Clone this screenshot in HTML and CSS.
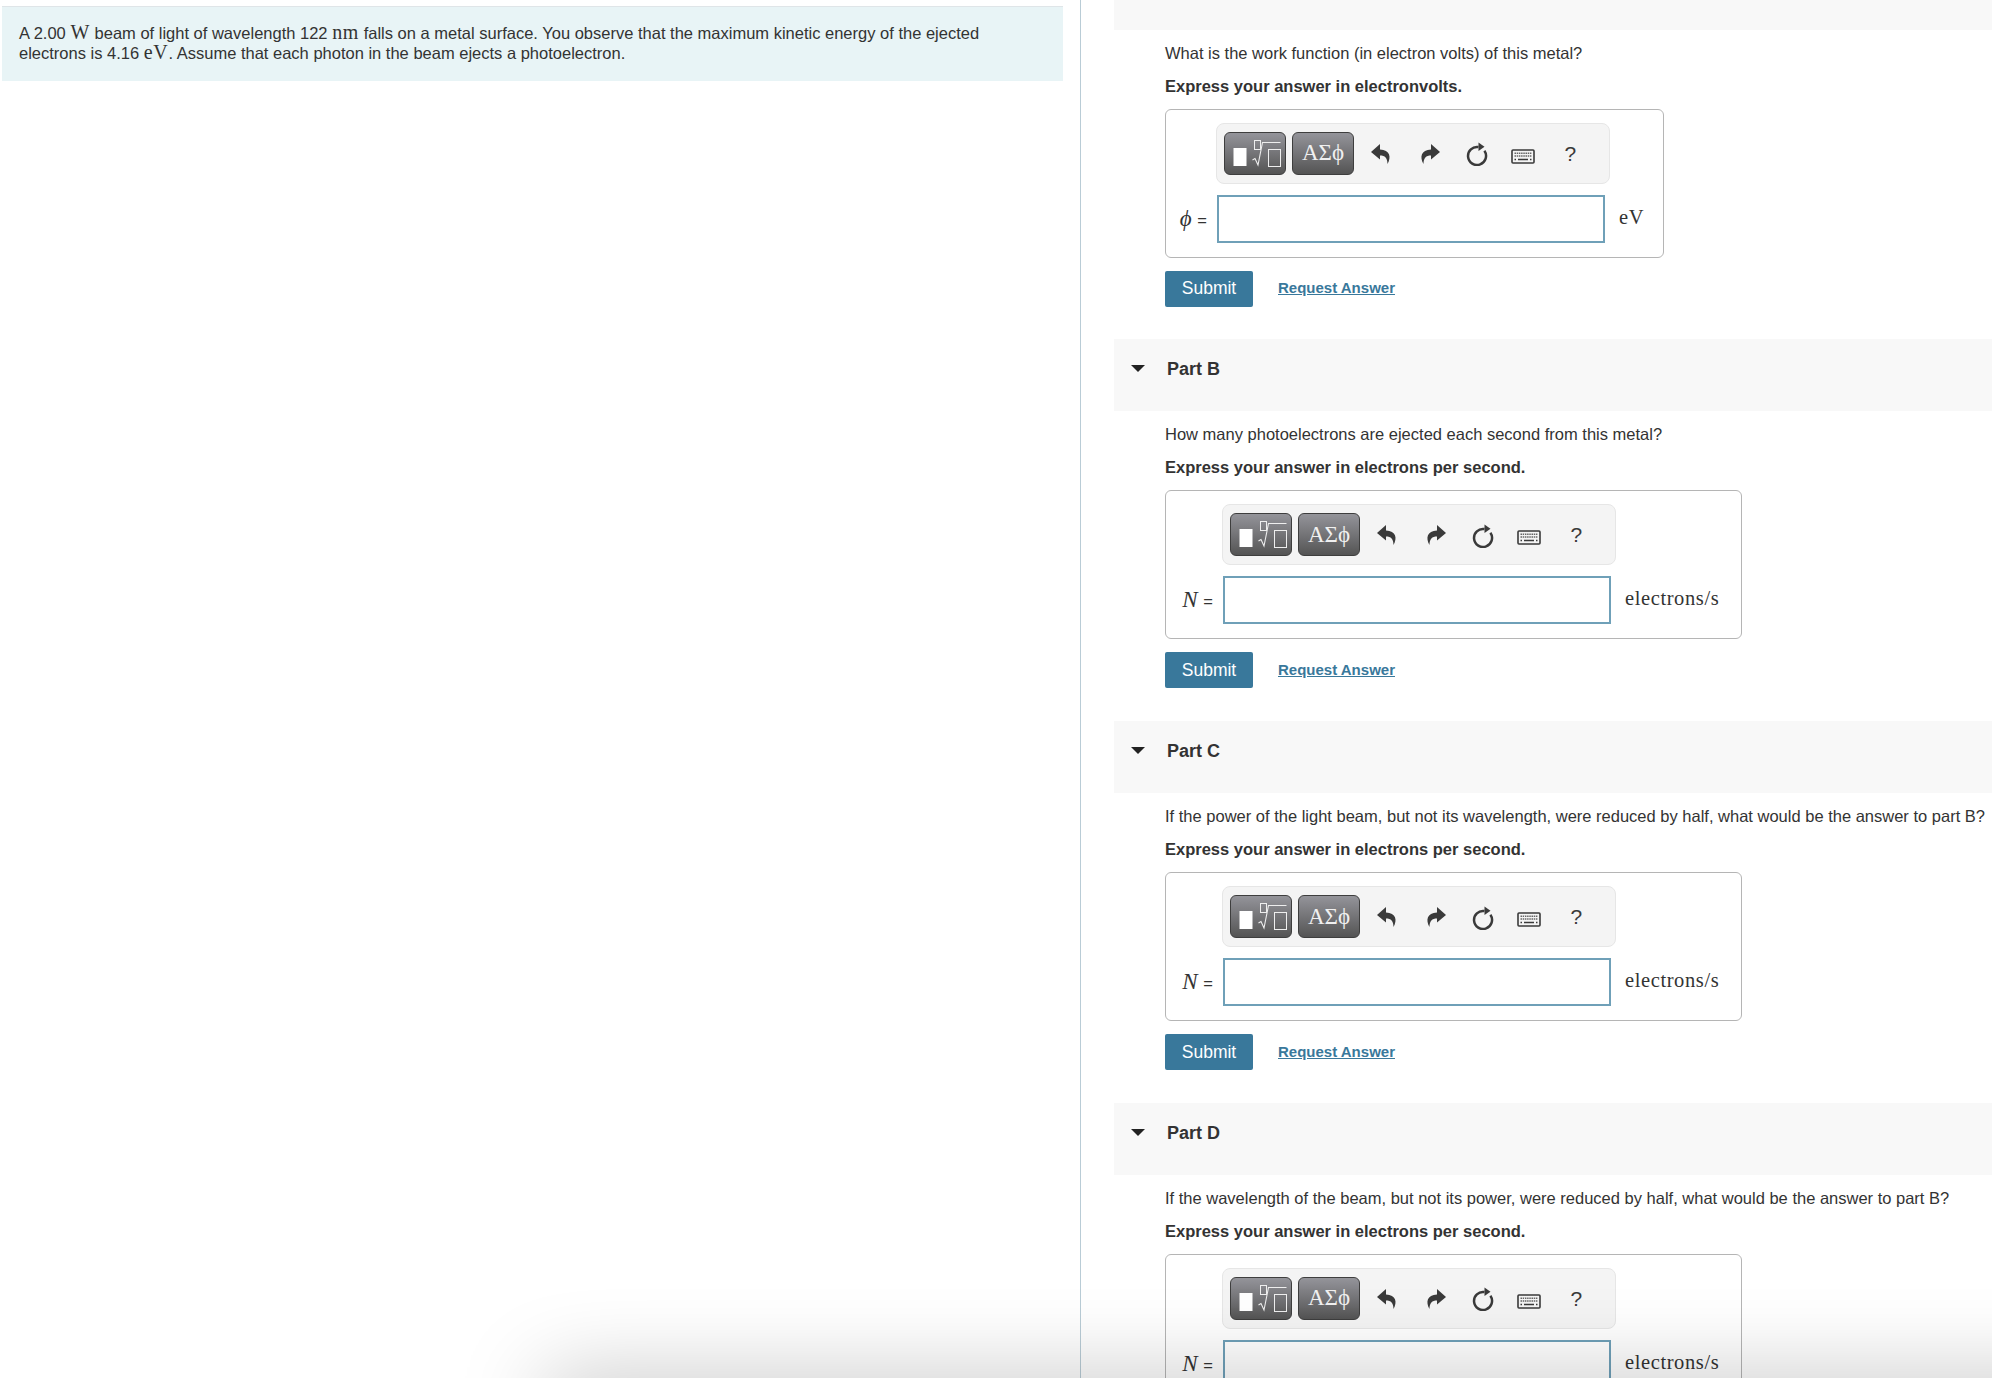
FILE: index.html
```html
<!DOCTYPE html>
<html lang="en">
<head>
    <meta charset="UTF-8">
    <meta name="viewport" content="width=device-width, initial-scale=1.0">
    <title>Photoelectric Effect</title>
    <link rel="stylesheet" href="styles.css">
</head>
<body>
    <svg class="defs" width="0" height="0">
        <symbol id="templates" viewBox="0 0 60 41">
            <rect x="8.500" y="15" width="13" height="18" fill="#fff"/>
            <rect x="29.500" y="7.500" width="6" height="9" fill="none" stroke="#eee" stroke-width="1"/>
            <path d="M27.500 27 L30 25.500 L33 32 L37.500 9.500 H55.500" fill="none" stroke="#eee" stroke-width="1.100"/>
            <rect x="43.500" y="16.500" width="12" height="17" fill="none" stroke="#eee" stroke-width="1"/>
        </symbol>
        <symbol id="undo" viewBox="0 0 24 24">
            <path d="M11 2 L2 10 L11 17.500 V13.500 C16 13.500 18.500 16 18.500 22 C22.500 15 21 8 11 7.500 Z" fill="#3a3a3a"/>
        </symbol>
        <symbol id="refresh" viewBox="0 0 24 24">
            <path d="M19.400 8.800 A9 9 0 1 1 13.500 5.100" fill="none" stroke="#3a3a3a" stroke-width="2.500"/>
            <path d="M13.500 0.500 L19.500 4.800 L13.500 9 Z" fill="#3a3a3a"/>
        </symbol>
        <symbol id="keyboard" viewBox="0 0 24 15">
            <rect x="1" y="1" width="22" height="13" rx="1" fill="#f4f4f4" stroke="#3a3a3a" stroke-width="1.600"/>
            <path d="M3.500 4.200 H20.500 M3.500 7 H20.500" fill="none" stroke="#666" stroke-width="1.500" stroke-dasharray="1.500 .7"/>
            <path d="M3.500 10.600 H5 M7 10.600 H17 M19 10.600 H20.500" fill="none" stroke="#3a3a3a" stroke-width="1.500"/>
        </symbol>
    </svg>

    <div class="page">

        <div class="intro">
            <div class="intro-box">
                <div class="intro-line">A 2.00 <span class="math">W</span> beam of light of wavelength 122 <span class="math">nm</span> falls on a metal surface. You observe that the maximum kinetic energy of the ejected</div>
                <div class="intro-line">electrons is 4.16 <span class="math">eV</span>. Assume that each photon in the beam ejects a photoelectron.</div>
            </div>
        </div>

        <div class="parts">

            <div class="part">
                <div class="part-head part-head-cut"></div>
                <div class="part-body">
                    <p class="question">What is the work function (in electron volts) of this metal?</p>
                    <p class="express">Express your answer in electronvolts.</p>
                    <div class="answer answer-a">
                        <div class="toolbar">
                            <button class="tool-btn"><svg class="tool-img"><use href="#templates"/></svg></button>
                            <button class="tool-btn">ΑΣϕ</button>
                            <svg class="icon icon-undo"><use href="#undo"/></svg>
                            <svg class="icon icon-redo"><use href="#undo"/></svg>
                            <svg class="icon icon-refresh"><use href="#refresh"/></svg>
                            <svg class="icon-kbd"><use href="#keyboard"/></svg>
                            <span class="help">?</span>
                        </div>
                        <span class="label"><i>ϕ</i> <span class="equals">=</span></span>
                        <div class="input"></div>
                        <span class="unit">eV</span>
                    </div>
                    <div class="actions">
                        <button class="submit">Submit</button>
                        <a class="request" href="#">Request Answer</a>
                    </div>
                </div>
            </div>

            <div class="part">
                <div class="part-head"><span class="caret"></span><span class="part-title">Part B</span></div>
                <div class="part-body">
                    <p class="question">How many photoelectrons are ejected each second from this metal?</p>
                    <p class="express">Express your answer in electrons per second.</p>
                    <div class="answer">
                        <div class="toolbar">
                            <button class="tool-btn"><svg class="tool-img"><use href="#templates"/></svg></button>
                            <button class="tool-btn">ΑΣϕ</button>
                            <svg class="icon icon-undo"><use href="#undo"/></svg>
                            <svg class="icon icon-redo"><use href="#undo"/></svg>
                            <svg class="icon icon-refresh"><use href="#refresh"/></svg>
                            <svg class="icon-kbd"><use href="#keyboard"/></svg>
                            <span class="help">?</span>
                        </div>
                        <span class="label"><i>N</i> <span class="equals">=</span></span>
                        <div class="input"></div>
                        <span class="unit">electrons/s</span>
                    </div>
                    <div class="actions">
                        <button class="submit">Submit</button>
                        <a class="request" href="#">Request Answer</a>
                    </div>
                </div>
            </div>

            <div class="part">
                <div class="part-head"><span class="caret"></span><span class="part-title">Part C</span></div>
                <div class="part-body">
                    <p class="question">If the power of the light beam, but not its wavelength, were reduced by half, what would be the answer to part B?</p>
                    <p class="express">Express your answer in electrons per second.</p>
                    <div class="answer">
                        <div class="toolbar">
                            <button class="tool-btn"><svg class="tool-img"><use href="#templates"/></svg></button>
                            <button class="tool-btn">ΑΣϕ</button>
                            <svg class="icon icon-undo"><use href="#undo"/></svg>
                            <svg class="icon icon-redo"><use href="#undo"/></svg>
                            <svg class="icon icon-refresh"><use href="#refresh"/></svg>
                            <svg class="icon-kbd"><use href="#keyboard"/></svg>
                            <span class="help">?</span>
                        </div>
                        <span class="label"><i>N</i> <span class="equals">=</span></span>
                        <div class="input"></div>
                        <span class="unit">electrons/s</span>
                    </div>
                    <div class="actions">
                        <button class="submit">Submit</button>
                        <a class="request" href="#">Request Answer</a>
                    </div>
                </div>
            </div>

            <div class="part">
                <div class="part-head"><span class="caret"></span><span class="part-title">Part D</span></div>
                <div class="part-body">
                    <p class="question">If the wavelength of the beam, but not its power, were reduced by half, what would be the answer to part B?</p>
                    <p class="express">Express your answer in electrons per second.</p>
                    <div class="answer">
                        <div class="toolbar">
                            <button class="tool-btn"><svg class="tool-img"><use href="#templates"/></svg></button>
                            <button class="tool-btn">ΑΣϕ</button>
                            <svg class="icon icon-undo"><use href="#undo"/></svg>
                            <svg class="icon icon-redo"><use href="#undo"/></svg>
                            <svg class="icon icon-refresh"><use href="#refresh"/></svg>
                            <svg class="icon-kbd"><use href="#keyboard"/></svg>
                            <span class="help">?</span>
                        </div>
                        <span class="label"><i>N</i> <span class="equals">=</span></span>
                        <div class="input"></div>
                        <span class="unit">electrons/s</span>
                    </div>
                </div>
            </div>

        </div>
    </div>

    <div class="bottom-fade"></div>
</body>
</html>
```
FILE: styles.css
```css
:root{
    --font-primary: "Liberation Sans", Arial, sans-serif;
    --font-math: "Liberation Serif", "Times New Roman", serif;
    --text: #333;
    --accent: #39789b;
}

html, body{
    margin: 0;
    height: 100%;
    overflow: hidden;
    background: #fff;
}

body{
    font-family: var(--font-primary);
    font-size: 16.5px;
    color: var(--text);
}

.defs{
    position: absolute;
}

.page{
    display: flex;
    height: 1378px;
    overflow: hidden;
}

/* left column */
.intro{
    width: 1081px;
    flex: none;
    padding: 6px 17px 0 2px;
    box-sizing: border-box;
    border-right: 1px solid #b9ccd6;
    margin-right: 33px;
}

.intro-box{
    background-color: #e8f4f6;
    border-top: 1px solid #dfe5e8;
    padding: 15px 17px 19px;
    height: 40px;
    white-space: nowrap;
}

.intro-line{
    height: 20px;
    line-height: 20px;
}

.math{
    font-family: var(--font-math);
    font-size: 20px;
    letter-spacing: 0.7px;
    line-height: 1;
}

/* right column */
.parts{
    flex: 1;
    min-width: 0;
}

.part-head{
    height: 72px;
    background-color: #f8f8f8;
    display: flex;
    align-items: flex-start;
    padding-top: 19px;
    box-sizing: border-box;
}

.part-head-cut{
    height: 29.7px;
    padding-top: 0;
}

.caret{
    width: 0;
    height: 0;
    margin: 7px 0 0 17px;
    border-left: 7px solid transparent;
    border-right: 7px solid transparent;
    border-top: 7px solid #222;
}

.part-title{
    font-weight: bold;
    font-size: 18px;
    line-height: 22px;
    margin-left: 22px;
}

.part-body{
    padding: 13px 0 0 51px;
    height: 296.7px;
}

.question{
    margin: 0;
    line-height: 20px;
    white-space: nowrap;
}

.express{
    margin: 13px 0 13px;
    line-height: 20px;
    font-weight: bold;
}

.answer{
    display: inline-grid;
    grid-template-columns: 57px 388px auto;
    row-gap: 11px;
    align-items: center;
    box-sizing: border-box;
    height: 149px;
    padding: 13px 22px 14px 0;
    border: 1px solid #b5b5b5;
    border-radius: 6px;
    vertical-align: top;
}

.answer-a{
    grid-template-columns: 51px 388px auto;
    padding-right: 19px;
}

.toolbar{
    grid-column: 2 / 4;
    justify-self: start;
    margin-left: -1px;
    width: 394px;
    height: 61px;
    box-sizing: border-box;
    display: flex;
    align-items: center;
    padding-left: 7px;
    gap: 6px;
    background-color: #f4f4f4;
    border: 1px solid #e6e6e6;
    border-radius: 8px;
}

.tool-btn{
    width: 62px;
    height: 43px;
    padding: 0;
    border: 1px solid #3e3e3e;
    border-radius: 6px;
    background: linear-gradient(#94949a, #545454);
    color: #f0f0f0;
    font-family: var(--font-math);
    font-size: 23px;
}

.tool-img{
    display: block;
    width: 60px;
    height: 41px;
}

.icon{
    width: 24px;
    height: 24px;
    flex: none;
}

.icon-undo{
    margin: 1px 0 0 9px;
}

.icon-redo{
    margin: 1px 0 0 19px;
    transform: scaleX(-1);
}

.icon-refresh{
    margin: 2px 0 0 17px;
}

.icon-kbd{
    margin: 6px 0 0 15.5px;
    width: 24px;
    height: 15px;
    flex: none;
}

.help{
    margin: 1px 0 0 24px;
    font-size: 21px;
    color: #3a3a3a;
}

.label{
    font-family: var(--font-math);
    font-size: 23px;
    text-align: right;
    padding-right: 10px;
    white-space: nowrap;
}

.equals{
    font-family: var(--font-primary);
    font-size: 16.5px;
}

.input{
    height: 48px;
    box-sizing: border-box;
    background: #fff;
    border: 2px solid #6fa0b8;
}

.unit{
    font-family: var(--font-math);
    font-size: 20.5px;
    letter-spacing: 0.6px;
    margin: -3px 0 0 14px;
    white-space: nowrap;
}

.actions{
    display: flex;
    align-items: center;
    gap: 25px;
    margin-top: 13px;
}

.submit{
    width: 88px;
    height: 36px;
    padding: 0;
    border: none;
    border-radius: 2px;
    background-color: var(--accent);
    color: #fff;
    font-family: var(--font-primary);
    font-size: 17.5px;
}

.request{
    color: var(--accent);
    font-weight: bold;
    font-size: 15px;
    margin-top: -2px;
}

/* the grey shadow that rises from below the bottom edge of the window */
.bottom-fade{
    position: absolute;
    left: 0;
    right: 0;
    bottom: 0;
    height: 90px;
    overflow: hidden;
    pointer-events: none;
}

.bottom-fade::after{
    content: "";
    position: absolute;
    left: 545px;
    right: -200px;
    top: 90px;
    height: 60px;
    box-shadow: 0 0 85px rgba(0, 0, 0, 0.25);
}
```
